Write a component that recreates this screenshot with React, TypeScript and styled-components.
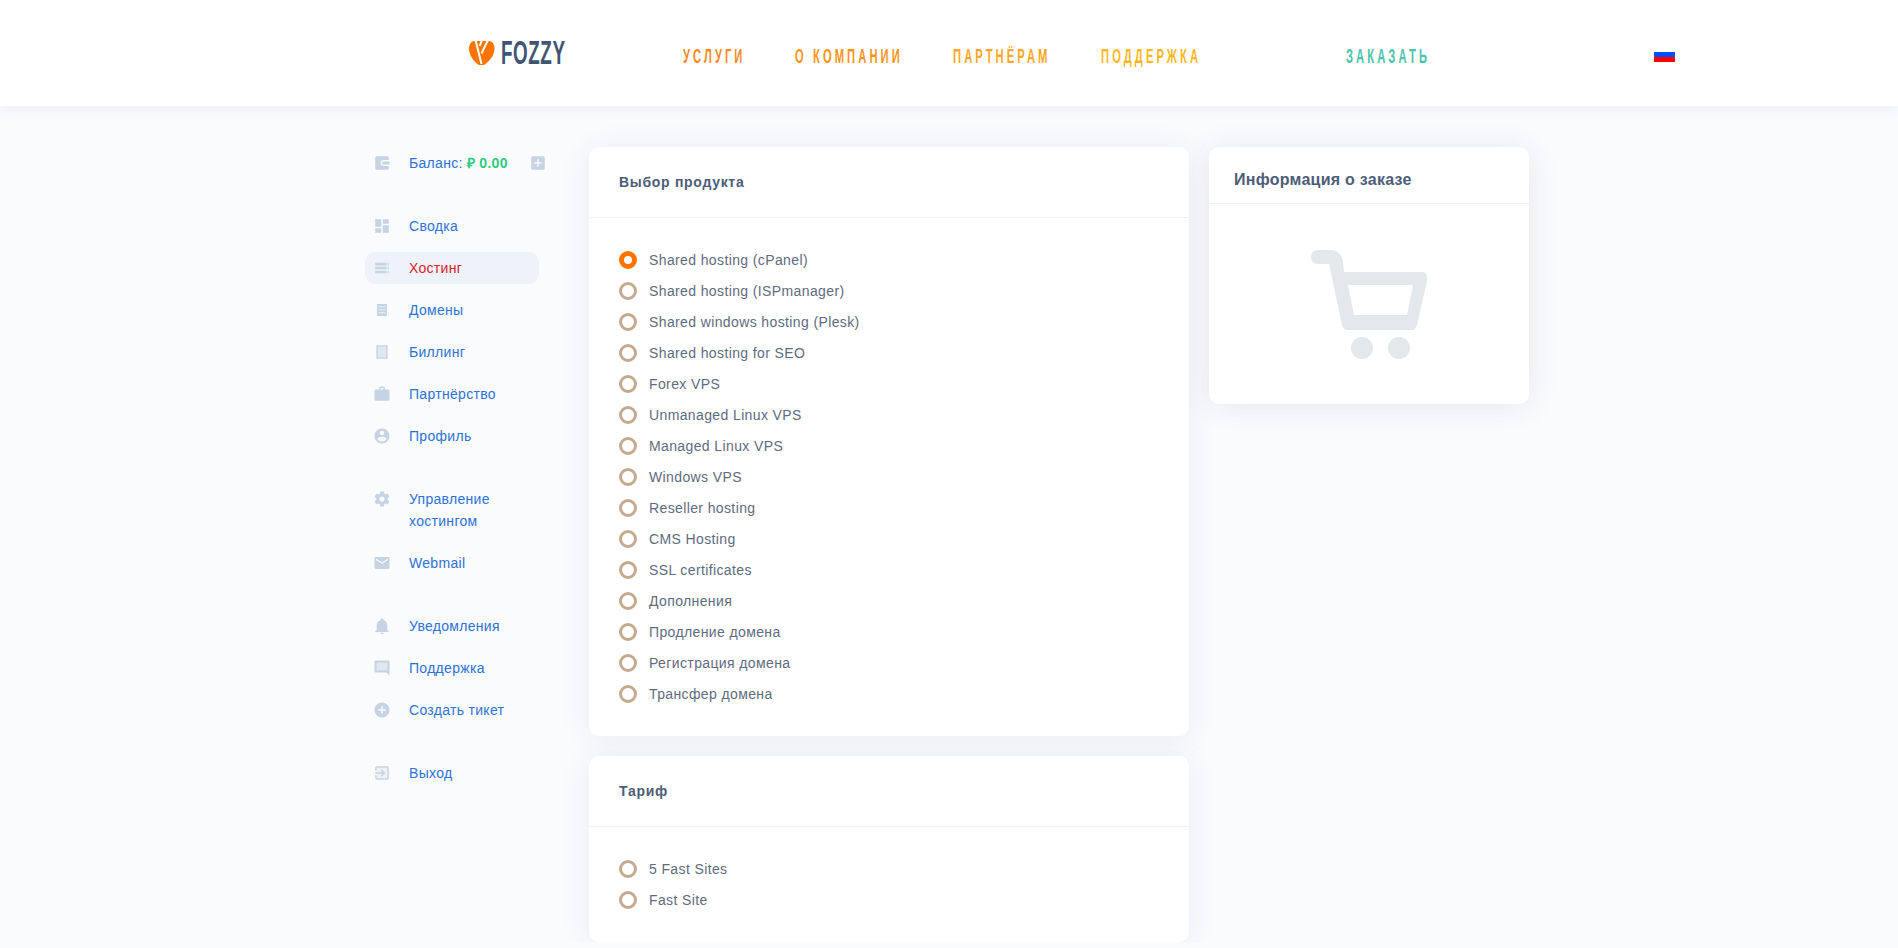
import React from "react";
import styled, { createGlobalStyle } from "styled-components";

const GlobalStyle = createGlobalStyle`
  html, body {
    margin: 0;
    padding: 0;
    background: #f9fbfd;
    font-family: "Liberation Sans", Arial, sans-serif;
  }
`;

const navItems = [
  { label: "Услуги", color: "#ff8a1c", width: 59, gap: 53 },
  { label: "О компании", color: "#ff9420", width: 105, gap: 53 },
  { label: "Партнёрам", color: "#ffa726", width: 97, gap: 51 },
  { label: "Поддержка", color: "#ffb81f", width: 100, gap: 145 },
  { label: "Заказать", color: "#4cc4ae", width: 80, gap: 0 },
];

const icons: Record<string, string> = {
  wallet: "M3 5c0-1.1.9-2 2-2h14c1.100 0 2 .9 2 2v3h-7c-2.200 0-4 1.800-4 4s1.800 4 4 4h7v3c0 1.100-.9 2-2 2H5c-1.100 0-2-.9-2-2V5zm11 5h8v4h-8c-1.100 0-2-.9-2-2s.9-2 2-2z",
  addBox:
    "M19 3H5c-1.11 0-2 .9-2 2v14c0 1.1.89 2 2 2h14c1.1 0 2-.9 2-2V5c0-1.1-.9-2-2-2zm-2 10h-4v4h-2v-4H7v-2h4V7h2v4h4v2z",
  dashboard: "M3 13h8V3H3v10zm0 8h8v-6H3v6zm10 0h8V11h-8v10zm0-18v6h8V3h-8z",
  storage:
    "M3 5h15v3.500H3V5zm16.500 0H21v3.500h-1.500V5zM3 10.200h15v3.500H3v-3.500zm16.500 0H21v3.500h-1.500v-3.500zM3 15.500h15V19H3v-3.500zm16.500 0H21V19h-1.500v-3.500z",
  domain:
    "M5.500 4h13v16h-13V4zm2 2.500v2h9v-2h-9zm0 4v2h9v-2h-9zm0 4v2h9v-2h-9z",
  billing: "M4.500 3h15v18h-15V3zm2 2v14h11V5h-11z",
  work:
    "M20 6h-4V4c0-1.11-.89-2-2-2h-4c-1.11 0-2 .89-2 2v2H4c-1.11 0-1.99.89-1.99 2L2 19c0 1.11.89 2 2 2h16c1.11 0 2-.89 2-2V8c0-1.11-.89-2-2-2zm-6 0h-4V4h4v2z",
  profile:
    "M12 2C6.48 2 2 6.48 2 12s4.48 10 10 10 10-4.48 10-10S17.52 2 12 2zm0 3c1.66 0 3 1.34 3 3s-1.34 3-3 3-3-1.34-3-3 1.34-3 3-3zm0 14.2c-2.5 0-4.71-1.28-6-3.22.03-1.99 4-3.08 6-3.08 1.99 0 5.97 1.09 6 3.08-1.29 1.94-3.5 3.22-6 3.22z",
  settings:
    "M19.43 12.98c.04-.32.07-.64.07-.98s-.03-.66-.07-.98l2.11-1.65c.19-.15.24-.42.12-.64l-2-3.46c-.12-.22-.39-.3-.61-.22l-2.49 1c-.52-.4-1.08-.73-1.69-.98l-.38-2.65C14.46 2.18 14.25 2 14 2h-4c-.25 0-.46.18-.49.42l-.38 2.65c-.61.25-1.17.59-1.69.98l-2.49-1c-.23-.09-.49 0-.61.22l-2 3.46c-.13.22-.07.49.12.64l2.11 1.65c-.04.32-.07.65-.07.98s.03.66.07.98l-2.11 1.65c-.19.15-.24.42-.12.64l2 3.46c.12.22.39.3.61.22l2.49-1c.52.4 1.08.73 1.69.98l.38 2.65c.03.24.24.42.49.42h4c.25 0 .46-.18.49-.42l.38-2.65c.61-.25 1.17-.59 1.69-.98l2.49 1c.23.09.49 0 .61-.22l2-3.46c.12-.22.07-.49-.12-.64l-2.11-1.65zM12 15.5c-1.93 0-3.5-1.57-3.5-3.5s1.57-3.5 3.5-3.5 3.5 1.57 3.5 3.5-1.57 3.5-3.5 3.5z",
  mail:
    "M20 4H4c-1.1 0-1.99.9-1.99 2L2 18c0 1.1.9 2 2 2h16c1.1 0 2-.9 2-2V6c0-1.1-.9-2-2-2zm0 4l-8 5-8-5V6l8 5 8-5v2z",
  bell:
    "M12 23c1.2 0 2.200-1 2.200-2h-4.400c0 1 1 2 2.200 2zm7-6v-6c0-3.300-1.900-6-5-6.800V3.500c0-1-.9-2-2-2s-2 1-2 2v.7C6.900 5 5 7.700 5 11v6l-2 2v1h18v-1l-2-2z",
  chat:
    "M4 2h16c1.1 0 2 .9 2 2v18l-4-4H4c-1.1 0-2-.9-2-2V4c0-1.1.9-2 2-2zm1 3v10h14V5H5z",
  addCircle:
    "M12 2C6.48 2 2 6.48 2 12s4.48 10 10 10 10-4.48 10-10S17.52 2 12 2zm5 11h-4v4h-2v-4H7v-2h4V7h2v4h4v2z",
  exit:
    "M10.09 15.59L11.5 17l5-5-5-5-1.41 1.41L12.67 11H3v2h9.67l-2.58 2.59zM19 3H5c-1.11 0-2 .9-2 2v4h2V5h14v14H5v-4H3v4c0 1.1.89 2 2 2h14c1.1 0 2-.9 2-2V5c0-1.1-.9-2-2-2z",
};

// lighter fill under the outlined icons
const iconFills: Record<string, string> = {
  domain: "M5.500 4h13v16h-13V4z",
  billing: "M6.500 5h11v14h-11V5z",
  chat: "M5 5h14v10H5V5z",
  exit: "M5 5h14v14H5V5z",
};

const menuGroups = [
  [
    { icon: "dashboard", label: "Сводка" },
    { icon: "storage", label: "Хостинг", active: true },
    { icon: "domain", label: "Домены" },
    { icon: "billing", label: "Биллинг" },
    { icon: "work", label: "Партнёрство" },
    { icon: "profile", label: "Профиль" },
  ],
  [
    { icon: "settings", label: "Управление хостингом" },
    { icon: "mail", label: "Webmail" },
  ],
  [
    { icon: "bell", label: "Уведомления" },
    { icon: "chat", label: "Поддержка" },
    { icon: "addCircle", label: "Создать тикет" },
  ],
  [{ icon: "exit", label: "Выход" }],
];

const products = [
  "Shared hosting (cPanel)",
  "Shared hosting (ISPmanager)",
  "Shared windows hosting (Plesk)",
  "Shared hosting for SEO",
  "Forex VPS",
  "Unmanaged Linux VPS",
  "Managed Linux VPS",
  "Windows VPS",
  "Reseller hosting",
  "CMS Hosting",
  "SSL certificates",
  "Дополнения",
  "Продление домена",
  "Регистрация домена",
  "Трансфер домена",
];

const tariffs = ["5 Fast Sites", "Fast Site"];

const Icon = ({ name }: { name: string }) => (
  <IconSvg viewBox="0 0 24 24" width={18} height={18}>
    {iconFills[name] && <path d={iconFills[name]} opacity={name === "exit" ? 0.2 : 0.5} />}
    <path d={icons[name]} fillRule="evenodd" />
  </IconSvg>
);

const RadioList = ({ items, checked }: { items: string[]; checked?: number }) => (
  <RadioGroup>
    {items.map((item, i) => (
      <RadioRow key={item}>
        <RadioMark $checked={i === checked} />
        {item}
      </RadioRow>
    ))}
  </RadioGroup>
);

export default function App() {
  return (
    <>
      <GlobalStyle />
      <Header>
        <HeaderInner>
          <Logo>
            <svg width="26" height="24" viewBox="0 0 26 24">
              <path
                d="M6 0C2 0 0 3.500 0 8c0 6 5 13 10 16h5c5-3 10.500-10 10.500-16 0-4.500-2-8-6-8H6z"
                fill="#ff7300"
              />
              <path
                d="M6.500 -1L12.500 23M19 -1L12.500 12.500M13 -1L10.800 5"
                fill="none"
                stroke="#fff"
                strokeWidth="2"
              />
            </svg>
            <LogoText>FOZZY</LogoText>
          </Logo>
          <Nav>
            {navItems.map((item) => (
              <NavLink
                key={item.label}
                $color={item.color}
                $width={item.width}
                $gap={item.gap}
              >
                {item.label}
              </NavLink>
            ))}
          </Nav>
          <Flag>
            <FlagStripe $color="#ffffff" />
            <FlagStripe $color="#0050ff" />
            <FlagStripe $color="#ff0000" />
          </Flag>
        </HeaderInner>
      </Header>
      <Page>
        <Sidebar>
          <BalanceRow>
            <Icon name="wallet" />
            <BalanceText>
              Баланс: <Amount>₽ 0.00</Amount>
            </BalanceText>
            <Icon name="addBox" />
          </BalanceRow>
          {menuGroups.map((group, i) => (
            <MenuGroup key={i}>
              {group.map((item) => (
                <MenuItem key={item.label} $active={item.active}>
                  <Icon name={item.icon} />
                  <MenuLabel $active={item.active}>{item.label}</MenuLabel>
                </MenuItem>
              ))}
            </MenuGroup>
          ))}
        </Sidebar>
        <MainColumn>
          <Card>
            <CardHead>Выбор продукта</CardHead>
            <CardBody>
              <RadioList items={products} checked={0} />
            </CardBody>
          </Card>
          <Card>
            <CardHead>Тариф</CardHead>
            <CardBody>
              <RadioList items={tariffs} />
            </CardBody>
          </Card>
        </MainColumn>
        <OrderCard>
          <OrderHead>Информация о заказе</OrderHead>
          <OrderBody>
            <svg width="117" height="110" viewBox="0 0 117 110">
              <path
                fillRule="evenodd"
                fill="#e3e8ec"
                d="M7 0H20C26 0 31 4 32 12L33 22H111C115 22 117 25 116 31L106 75C105 78 103 80 100 80H37C34 80 32 78 31 75L18 14H7C3 14 0 11 0 7S3 0 7 0ZM37 35L43 65H96L102 35H37Z"
              />
              <circle cx="51" cy="98" r="11" fill="#e3e8ec" />
              <circle cx="88" cy="98" r="11" fill="#e3e8ec" />
            </svg>
          </OrderBody>
        </OrderCard>
      </Page>
    </>
  );
}

const Header = styled.header`
  position: relative;
  height: 106px;
  background: #fff;
  box-shadow: 0 2px 12px rgba(60, 80, 110, 0.08);
`;

const HeaderInner = styled.div`
  display: flex;
  align-items: center;
  height: 100%;
  padding: 0 0 0 469px;
`;

const Logo = styled.div`
  display: flex;
  align-items: center;
  gap: 6px;
  width: 214px;
`;

const LogoText = styled.span`
  display: inline-block;
  font-size: 33px;
  line-height: 24px;
  font-weight: 700;
  letter-spacing: 1px;
  color: #3f5573;
  transform: scaleX(0.57);
  transform-origin: left center;
`;

const Nav = styled.nav`
  display: flex;
  width: 971px;
  padding-top: 5px;
`;

const NavLink = styled.a<{ $color: string; $width: number; $gap: number }>`
  display: block;
  width: ${(p) => p.$width}px;
  margin-right: ${(p) => p.$gap}px;
  font-size: 20px;
  line-height: 24px;
  font-weight: 700;
  letter-spacing: 5.5px;
  text-transform: uppercase;
  white-space: nowrap;
  color: ${(p) => p.$color};
  transform: scaleX(0.56);
  transform-origin: left center;
`;

const Flag = styled.div`
  display: flex;
  flex-direction: column;
  width: 21px;
  height: 15px;
  margin-top: 3px;
`;

const FlagStripe = styled.div<{ $color: string }>`
  flex: 1;
  background: ${(p) => p.$color};
`;

const Page = styled.div`
  display: flex;
  align-items: flex-start;
  padding: 41px 0 0 365px;
`;

const Sidebar = styled.aside`
  width: 224px;
  flex: none;
`;

const BalanceRow = styled.div`
  display: flex;
  align-items: center;
  width: 174px;
  height: 30px;
  padding-left: 8px;
  margin-bottom: 33px;
  font-size: 14px;
`;

const BalanceText = styled.span`
  margin-left: 18px;
  width: 69px;
  flex: 1;
  letter-spacing: 0.3px;
  color: #2f72d6;
  white-space: nowrap;
`;

const Amount = styled.b`
  color: #2ecc80;
`;

const MenuGroup = styled.div`
  padding-bottom: 21px;
`;

const MenuItem = styled.div<{ $active?: boolean }>`
  display: flex;
  align-items: flex-start;
  width: 174px;
  min-height: 32px;
  padding: 5px 0 5px 8px;
  margin-bottom: 10px;
  box-sizing: border-box;
  border-radius: 10px;
  background: ${(p) => (p.$active ? "#eef2fa" : "transparent")};
`;

const MenuLabel = styled.span<{ $active?: boolean }>`
  margin-left: 18px;
  width: 100px;
  font-size: 14px;
  line-height: 22px;
  letter-spacing: 0.3px;
  color: ${(p) => (p.$active ? "#d81e2c" : "#2f72d6")};
`;

const IconSvg = styled.svg`
  flex: none;
  fill: #c5d3e2;
  margin-top: 2px;
`;

const MainColumn = styled.main`
  width: 600px;
  flex: none;
  display: flex;
  flex-direction: column;
  gap: 20px;
`;

const Card = styled.section`
  background: #fff;
  border-radius: 10px;
  box-shadow: 0 2px 30px rgba(60, 70, 90, 0.08);
`;

const CardHead = styled.h2`
  margin: 0;
  height: 70px;
  padding-left: 30px;
  border-bottom: 1px solid #f0f3f7;
  font-size: 14px;
  line-height: 71px;
  font-weight: 700;
  letter-spacing: 0.7px;
  color: #4d5d78;
`;

const CardBody = styled.div`
  padding: 26px 30px 27px;
`;

const RadioGroup = styled.div`
  display: flex;
  flex-direction: column;
`;

const RadioRow = styled.label`
  display: flex;
  align-items: center;
  height: 31px;
  font-size: 14px;
  letter-spacing: 0.38px;
  color: #5f6b80;
`;

const RadioMark = styled.span<{ $checked?: boolean }>`
  width: 18px;
  height: 18px;
  box-sizing: border-box;
  margin-right: 12px;
  border-radius: 50%;
  border: ${(p) => (p.$checked ? "5px solid #ff7300" : "3px solid #c4ab90")};
  background: #fff;
`;

const OrderCard = styled.aside`
  width: 320px;
  height: 257px;
  flex: none;
  margin-left: 20px;
  background: #fff;
  border-radius: 10px;
  box-shadow: 0 2px 30px rgba(60, 70, 90, 0.1);
`;

const OrderHead = styled.h3`
  margin: 0;
  height: 57px;
  box-sizing: border-box;
  padding: 21px 0 0 25px;
  border-bottom: 1px solid #eef2f7;
  font-size: 16px;
  line-height: 24px;
  font-weight: 700;
  letter-spacing: 0.25px;
  color: #4d5d78;
`;

const OrderBody = styled.div`
  display: flex;
  justify-content: center;
  padding-top: 46px;
`;
